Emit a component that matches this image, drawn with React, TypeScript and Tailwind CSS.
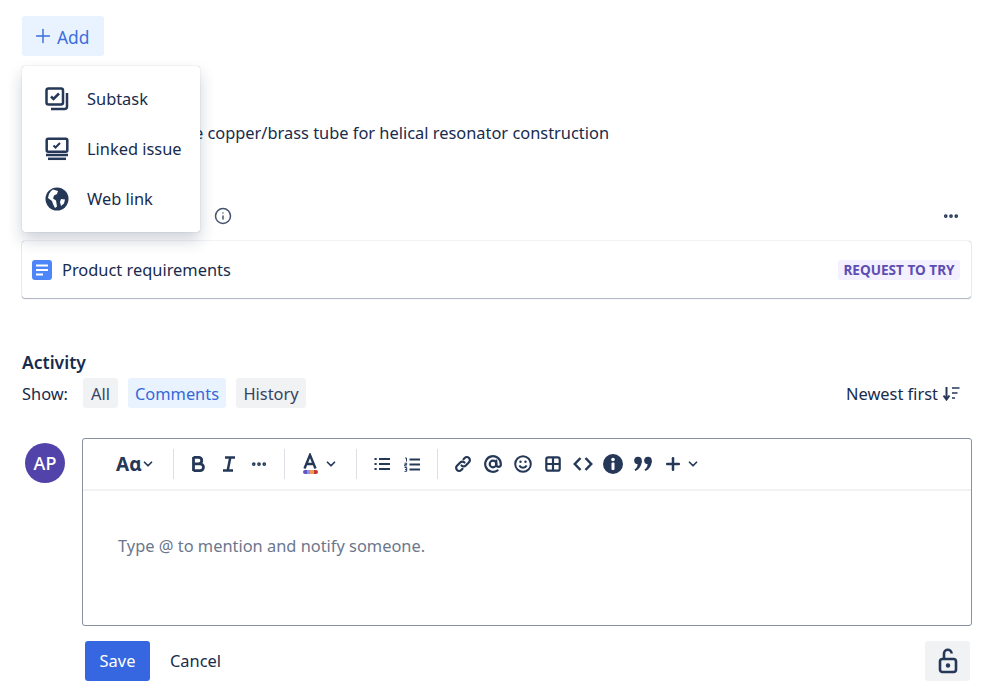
// App.tsx
// Issue view: Add menu, linked content card, activity tabs and comment editor.
import { Plus, ChevronDown, Ellipsis, Info } from 'lucide-react'
import type { ReactNode } from 'react'

function SubtaskIcon() {
  return (
    <svg width="24" height="24" viewBox="0 0 24 24" fill="none" stroke="#253858" strokeWidth="2.500">
      <rect x="1.500" y="1.500" width="16.500" height="16" rx="2" />
      <path d="M6 9.500l2.500 2.500L14 6.500" />
      <path d="M22 6v13.500a2.500 2.500 0 0 1-2.500 2.500H6" />
    </svg>
  )
}

function LinkedIssueIcon() {
  return (
    <svg width="24" height="24" viewBox="0 0 24 24" fill="none" stroke="#253858" strokeWidth="2.500">
      <rect x="1.700" y="1.700" width="20.600" height="13" rx="1.500" />
      <path d="M8.500 8.500l2 2 4.500-4.500" strokeWidth="2" />
      <path d="M1 18h22" />
      <path d="M3 21.800h18" />
    </svg>
  )
}

function GlobeIcon() {
  return (
    <svg width="24" height="24" viewBox="0 0 24 24">
      <circle cx="12" cy="12" r="11.500" fill="#253858" />
      <path d="M8 2.500l5 1.500-1 3-3 1.500-1 3 3 2 1 6-2 1.500-2-4-1-3-4-3 1-4 2-3zM16 12l4 .5-1 4-3 2.500-1-4z" fill="#fff" />
    </svg>
  )
}

function ColorAIcon() {
  return (
    <span className="flex h-6 w-[18px] flex-col items-center">
      <svg width="16" height="16" viewBox="0 0 16 16" fill="none" stroke="#253858" strokeWidth="2.400" className="mt-[1px]">
        <path d="M2.500 15.500L8 2l5.500 13.500M4.500 11h7" />
      </svg>
      <span className="mt-[1px] flex h-[4px] w-[15px] overflow-hidden rounded-full">
        <span className="w-[4px] bg-[#6554c0]" />
        <span className="w-[3px] bg-[#8993e8]" />
        <span className="w-[4px] bg-[#ed9b5b]" />
        <span className="w-[4px] bg-[#c9372c]" />
      </span>
    </span>
  )
}

function BoldIcon() {
  return (
    <svg width="16" height="18" viewBox="0 0 16 18" fill="none" stroke="#253858" strokeWidth="2.800">
      <path d="M2.500 2v14M2.500 2.300h5.500a3.300 3.300 0 0 1 0 6.500H2.500M2.500 8.800h6.500a3.400 3.400 0 0 1 0 6.900H2.500" />
    </svg>
  )
}

function ItalicIcon() {
  return (
    <svg width="14" height="16" viewBox="0 0 14 16" fill="none" stroke="#253858" strokeWidth="2.500">
      <path d="M3 1.500h10M1 14.500h10M8.300 1.500L5.700 14.500" />
    </svg>
  )
}

function BulletsIcon() {
  return (
    <svg width="16" height="14" viewBox="0 0 16 14" stroke="#253858" strokeWidth="2.200">
      <path d="M0.500 2h2.200M0.500 7h2.200M0.500 12h2.200M5 2h11M5 7h11M5 12h11" />
    </svg>
  )
}

function NumbersIcon() {
  return (
    <svg width="16" height="15" viewBox="0 0 16 15" fill="none" stroke="#253858">
      <path d="M5.500 2.500h10.500M5.500 7.500h10.500M5.500 12.500h10.500" strokeWidth="2.200" />
      <path d="M1 1h1.500v3.500M0.500 6.200h2.200v1.400H.7v1.400h2.200M0.500 10.500h2.200v3.800H.5M1 12.400h1.700" strokeWidth="1" />
    </svg>
  )
}

function LinkIcon() {
  return (
    <svg width="18" height="18" viewBox="0 0 18 18" fill="none" stroke="#253858" strokeWidth="2.200" strokeLinecap="round">
      <path d="M7.500 10.500a3 3 0 0 0 4.300 0l3.200-3.200a3 3 0 0 0-4.300-4.300L9.500 4.200" />
      <path d="M10.500 7.500a3 3 0 0 0-4.300 0L3 10.700A3 3 0 0 0 7.300 15l1.200-1.200" />
    </svg>
  )
}

function MentionIcon() {
  return (
    <svg width="18" height="18" viewBox="0 0 18 18" fill="none" stroke="#253858" strokeWidth="2.200" strokeLinecap="round">
      <circle cx="9" cy="9" r="3.300" />
      <path d="M12.300 5.500V10a2.300 2.300 0 0 0 4.500 0V9a7.800 7.800 0 1 0-3.200 6.300" />
    </svg>
  )
}

function SmileIcon() {
  return (
    <svg width="18" height="18" viewBox="0 0 18 18" fill="none" stroke="#253858" strokeWidth="2">
      <circle cx="9" cy="9" r="7.800" />
      <path d="M5.300 10.500c1.800 3 5.600 3 7.400 0" />
      <circle cx="6.500" cy="6.800" r="1.200" fill="#253858" stroke="none" />
      <circle cx="11.500" cy="6.800" r="1.200" fill="#253858" stroke="none" />
    </svg>
  )
}

function TableIcon() {
  return (
    <svg width="16" height="16" viewBox="0 0 16 16" fill="none" stroke="#253858" strokeWidth="2.200">
      <rect x="1.300" y="1.300" width="13.400" height="13.400" rx="2" />
      <path d="M8 1.300v13.400M1.300 8h13.400" />
    </svg>
  )
}

function CodeIcon() {
  return (
    <svg width="20" height="16" viewBox="0 0 20 16" fill="none" stroke="#253858" strokeWidth="2.500">
      <path d="M7.500 2L1.800 8l5.700 6M12.500 2l5.700 6-5.700 6" />
    </svg>
  )
}

function QuoteIcon() {
  return (
    <svg width="20" height="18" viewBox="0 0 20 18" fill="#253858">
      <circle cx="5" cy="5.500" r="3.800" />
      <circle cx="15" cy="5.500" r="3.800" />
      <path d="M8.800 5.500c0 5-2.500 9-6.500 10.500L1.500 14.500c2-1.200 3-3 3-5zM18.800 5.500c0 5-2.500 9-6.500 10.500l-.8-1.500c2-1.200 3-3 3-5z" />
    </svg>
  )
}

function SortIcon() {
  return (
    <svg width="17" height="14" viewBox="0 0 17 14" fill="none" stroke="#253858">
      <path d="M3.500 0v12M.5 8.500l3 4 3-4" strokeWidth="2" />
      <path d="M9 1h7.500M9 6h5.500M9 11h3" strokeWidth="1.700" />
    </svg>
  )
}

function LockIcon() {
  return (
    <svg width="20" height="26" viewBox="0 0 20 26" fill="none" stroke="#253858" strokeWidth="2.600">
      <rect x="2" y="11" width="16" height="13" rx="2.500" />
      <path d="M6 11V5.500a3.800 3.800 0 0 1 7.600 0" />
      <circle cx="10" cy="17.500" r="2.200" fill="#253858" stroke="none" />
    </svg>
  )
}

function MenuItem({ icon, label }: { icon: ReactNode; label: string }) {
  return (
    <div className="flex h-[50px] items-center gap-[18px] pl-[23px]">
      {icon}
      <span>{label}</span>
    </div>
  )
}

function Tab({ label, width, active }: { label: string; width: string; active?: boolean }) {
  return (
    <span className={`flex h-[30px] items-center justify-center rounded-[3px] pt-[1px] ${width} ${active ? 'bg-[#e9f2ff] text-[#3667d8]' : 'bg-[#f1f2f4] text-[#344563]'}`}>
      {label}
    </span>
  )
}

// Toolbar buttons sit on a 30px grid
function Slot({ children }: { children: ReactNode }) {
  return <span className="flex h-[30px] w-[30px] shrink-0 items-center justify-center">{children}</span>
}

function Divider() {
  return <span className="mx-[10px] h-[30px] w-px shrink-0 bg-[#dcdfe4]" />
}

export default function App() {
  return (
    <div className="relative h-[683px] overflow-hidden bg-white pl-[22px] pr-[20px] pt-[16px] text-[16.4px] leading-[24px] text-[#172b4d]" style={{ fontFamily: '"Noto Sans", sans-serif' }}>
      <button className="flex h-[40px] w-[82px] items-center gap-[3px] rounded-[3px] bg-[#e9f2ff] pl-[10px] text-[17.400px] text-[#3b6fdc]">
        <Plus size={22} strokeWidth={1.600} />
        <span className="pt-[1px]">Add</span>
      </button>

      {/* menu over the description */}
      <div className="absolute left-[22px] top-[66px] z-10 w-[178px] rounded-[3px] bg-white py-[8px] shadow-[0_8px_16px_rgba(9,30,66,0.2),0_0_1px_rgba(9,30,66,0.35)]">
        <MenuItem icon={<SubtaskIcon />} label="Subtask" />
        <MenuItem icon={<LinkedIssueIcon />} label="Linked issue" />
        <MenuItem icon={<GlobeIcon />} label="Web link" />
      </div>

      <p className="mt-[65px] pl-[99px]">Source the copper/brass tube for helical resonator construction</p>

      <div className="mt-[59px] flex h-[24px] items-center justify-between pr-[12px]">
        <div className="flex items-center">
          <span className="w-[192px] font-semibold">Confluence pages</span>
          <Info size={18} strokeWidth={2} className="text-[#44546f]" />
        </div>
        <Ellipsis size={18} strokeWidth={3} className="text-[#253858]" />
      </div>

      <div className="mr-px mt-[13px] flex h-[57px] items-center justify-between rounded-[3px] bg-white pl-[10px] pr-[11px] shadow-[0_1px_1px_rgba(9,30,66,0.3),0_0_1px_rgba(9,30,66,0.55)]">
        <div className="flex items-center gap-[10px]">
          <svg width="20" height="20" viewBox="0 0 20 20">
            <rect width="20" height="20" rx="3" fill="#4c86f9" />
            <path d="M4 5.500h12M4 10h12M4 14.500h7" stroke="#fff" strokeWidth="2" />
          </svg>
          <span>Product requirements</span>
        </div>
        <span className="flex h-[20px] w-[122px] items-center justify-center rounded-[3px] bg-[#f3f0ff] text-[13.6px] font-bold text-[#5e4db2]">REQUEST TO TRY</span>
      </div>

      <h2 className="mt-[52px] text-[17.500px] font-semibold">Activity</h2>
      <div className="mt-[4px] flex h-[30px] items-center">
        <span className="mr-[15px] pt-[1px]">Show:</span>
        <div className="flex gap-[10px]">
          <Tab label="All" width="w-[35px]" />
          <Tab label="Comments" width="w-[98px]" active />
          <Tab label="History" width="w-[70px]" />
        </div>
        <span className="ml-auto mr-[12px] flex items-center gap-[5px] pt-[1px]">
          Newest first <SortIcon />
        </span>
      </div>

      <div className="mt-[30px] flex">
        <div className="ml-[3px] mt-[5px] flex h-[40px] w-[40px] items-center justify-center rounded-full bg-[#5243aa] text-[18px] font-medium text-white">AP</div>
        <div className="ml-[17px] flex-1">
          <div className="h-[188px] rounded-[3px] border border-[#8590a2]">
            <div className="flex h-[52px] items-center border-b-2 border-[#f1f2f4] pl-[33px] text-[#253858]">
              <span className="flex w-[47px] items-center">
                <span className="text-[19px] font-bold">Aɑ</span>
                <ChevronDown size={14} strokeWidth={3} />
              </span>
              <Divider />
              <Slot><BoldIcon /></Slot>
              <Slot><ItalicIcon /></Slot>
              <Slot><Ellipsis size={18} strokeWidth={3} /></Slot>
              <Divider />
              <span className="flex w-[51px] items-center pl-[6px]">
                <ColorAIcon />
                <ChevronDown size={14} strokeWidth={3} className="ml-[5px]" />
              </span>
              <Divider />
              <Slot><BulletsIcon /></Slot>
              <Slot><NumbersIcon /></Slot>
              <Divider />
              <Slot><LinkIcon /></Slot>
              <Slot><MentionIcon /></Slot>
              <Slot><SmileIcon /></Slot>
              <Slot><TableIcon /></Slot>
              <Slot><CodeIcon /></Slot>
              <Slot>
                <svg width="20" height="20" viewBox="0 0 20 20">
                  <circle cx="10" cy="10" r="10" fill="#253858" />
                  <circle cx="10" cy="5.500" r="1.800" fill="#fff" />
                  <rect x="8.500" y="8.500" width="3" height="7.500" rx="1" fill="#fff" />
                </svg>
              </Slot>
              <Slot><QuoteIcon /></Slot>
              <Slot><Plus size={20} strokeWidth={3} /></Slot>
              <ChevronDown size={14} strokeWidth={3} className="-ml-[2px]" />
            </div>
            <div className="pl-[35px] pt-[43px] text-[#6b778c]">Type @ to mention and notify someone.</div>
          </div>
          <div className="mt-[15px] flex items-center pl-[3px]">
            <button className="h-[40px] w-[65px] rounded-[3px] bg-[#3667e0] text-white">Save</button>
            <span className="ml-[20px]">Cancel</span>
            <span className="ml-auto mr-[2px] flex h-[40px] w-[45px] items-center justify-center rounded-[3px] bg-[#f1f2f4]">
              <LockIcon />
            </span>
          </div>
        </div>
      </div>
    </div>
  )
}
